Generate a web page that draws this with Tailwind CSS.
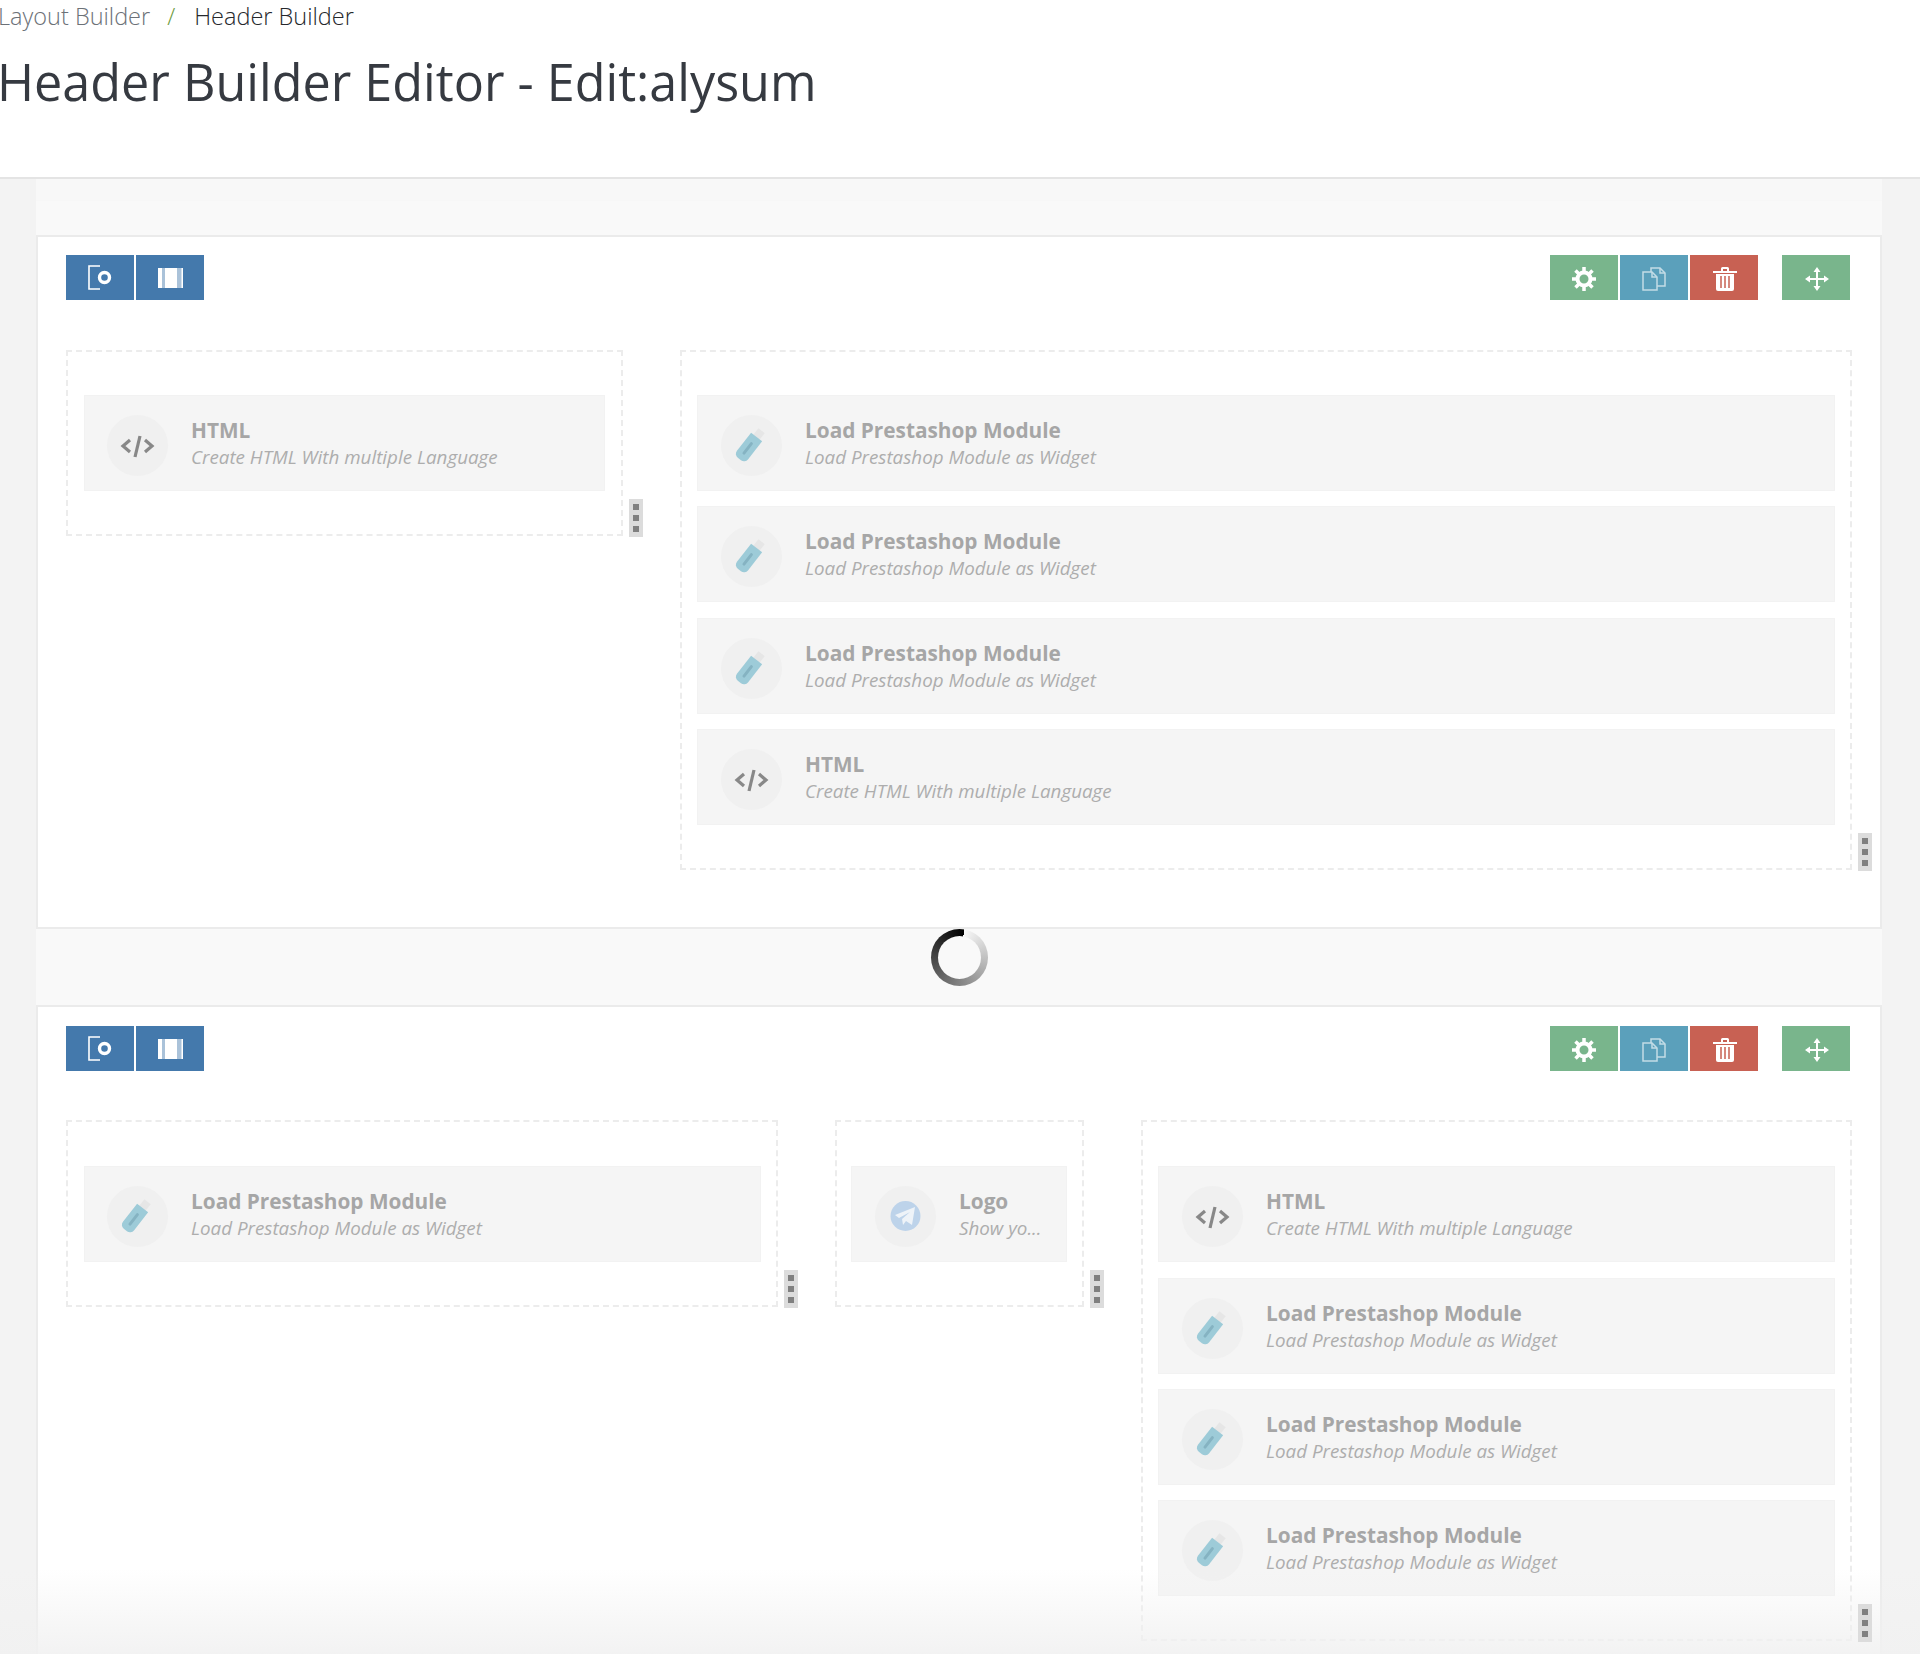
<!doctype html>
<html>
<head>
<meta charset="utf-8">
<script src="https://cdn.jsdelivr.net/npm/@tailwindcss/browser@4"></script>
</head>
<body class="font-['Open_Sans',sans-serif]">
<svg class="hidden">
<symbol id="usb" viewBox="0 0 61 61"><g transform="translate(27 33) rotate(38)"><rect x="-4" y="-22" width="8" height="9" fill="#e6e6e6"/><path d="M-7-14H7V9a5 5 0 0 1-5 5H-2a5 5 0 0 1-5-5Z" fill="#9dcbd8"/><rect x="-1.500" y="-7" width="3" height="15" rx="1.500" fill="#85b3c2"/></g></symbol>
<symbol id="code" viewBox="0 0 61 61"><g fill="none" stroke="#888" stroke-width="3.200"><path d="M23 25l-7 6 7 6M38 25l7 6-7 6"/><path d="M33 21l-5 21"/></g></symbol>
<symbol id="tg" viewBox="0 0 61 61"><circle cx="30.500" cy="30" r="15" fill="#bdd3ea"/><path d="M20 29l20-8-3 18-6-4-3 4-1-6 8-7-11 6Z" fill="#eef3f8"/></symbol>
<symbol id="add" viewBox="0 0 24 25"><g fill="none" stroke="#fff"><path stroke-width="1.600" d="M12 1H1v23h11"/><circle cx="16.500" cy="12.500" r="5" stroke-width="3.400"/></g></symbol>
<symbol id="cols" viewBox="0 0 25 20"><rect x="0" y="0" width="25" height="20" fill="#fff" opacity=".55"/><rect x="0" y="0" width="4" height="20" fill="#fff"/><rect x="7" y="0" width="12" height="20" fill="#fff"/><rect x="23.500" y="0" width="1.500" height="20" fill="#fff"/></symbol>
<symbol id="gear" viewBox="0 0 24 24"><g fill="none" stroke="#fff"><circle cx="12" cy="12" r="6.500" stroke-width="4"/><path stroke-width="3.500" d="M12 0v5M12 19v5M0 12h5M19 12h5M3.500 3.500l3.500 3.500M17 17l3.500 3.500M20.500 3.500L17 7M7 17l-3.500 3.500"/></g></symbol>
<symbol id="copy" viewBox="0 0 24 24"><g fill="#5ba0bb" stroke="#c3dce6" stroke-width="1.500"><path d="M9 1h9l5 5v13H9Z"/><path d="M1 5h9l5 5v13H1Z"/><path d="M10 5v5h5M18 1v5h5" fill="none"/></g></symbol>
<symbol id="trash" viewBox="0 0 24 25"><path d="M0 5h24v2H0Z M8 5V2.500A1.500 1.500 0 0 1 9.500 1h5A1.500 1.500 0 0 1 16 2.500V5h-2V3h-4v2Z" fill="#fff"/><path d="M3 8h18v15a2 2 0 0 1-2 2H5a2 2 0 0 1-2-2Z" fill="#fff"/><path d="M8 10v12M12 10v12M16 10v12" stroke="#c86153" stroke-width="1.500"/></symbol>
<symbol id="move" viewBox="0 0 24 24"><path d="M12 0l3.500 5H13v6h6V8.500L24 12l-5 3.500V13h-6v6h2.500L12 24l-3.500-5H11v-6H5v2.500L0 12l5-3.500V11h6V5H8.500Z" fill="#fff"/></symbol>
</svg>

<div class="relative h-[1654px] w-[1920px] overflow-hidden bg-[#f3f3f3] flex flex-col">
  <header class="h-[179px] shrink-0 bg-white border-b-2 border-[#e4e4e4] text-[#363a41]">
    <nav class="flex items-center h-[32px] text-[23.500px] leading-[32px] font-light -ml-[2px]">
      <span class="text-[#6c7177]">Layout Builder</span>
      <span class="ml-[17px] mr-[19px] text-[#6c9a3e]">/</span>
      <span class="text-[#25282c]">Header Builder</span>
    </nav>
    <h1 class="mt-[16px] -ml-[3px] text-[50.300px] leading-[68px] font-normal whitespace-nowrap">Header Builder Editor - Edit:alysum</h1>
  </header>

  <main class="ml-[36px] mr-[38px] bg-[#f9f9f9] flex-1 flex flex-col">
    <div class="h-[22px] border-b border-[#f7f7f7] bg-[#f8f8f8]"></div>
    <div class="h-[34px]"></div>

    <!-- first row -->
    <section class="bg-white border-2 border-[#ebebeb] pl-[28px] pr-[28px] pt-[18px] pb-[57px]">
      <div class="flex justify-between pr-[2px]">
        <div class="flex gap-[2px]">
          <button class="w-[68px] h-[45px] bg-[#4479ac] flex items-center justify-center"><svg class="w-[24px] h-[25px]"><use href="#add"/></svg></button>
          <button class="w-[68px] h-[45px] bg-[#4479ac] flex items-center justify-center"><svg class="w-[25px] h-[20px]"><use href="#cols"/></svg></button>
        </div>
        <div class="flex gap-[24px]">
          <div class="flex gap-[2px]">
            <button class="w-[68px] h-[45px] pt-[2px] bg-[#79b58c] flex items-center justify-center"><svg class="w-[24px] h-[24px]"><use href="#gear"/></svg></button>
            <button class="w-[68px] h-[45px] pt-[2px] bg-[#5ba0bb] flex items-center justify-center"><svg class="w-[24px] h-[24px]"><use href="#copy"/></svg></button>
            <button class="w-[68px] h-[45px] pt-[2px] pl-[2px] bg-[#c86153] flex items-center justify-center"><svg class="w-[24px] h-[25px]"><use href="#trash"/></svg></button>
          </div>
          <button class="w-[68px] h-[45px] pt-[2px] pl-[2px] bg-[#79b58c] flex items-center justify-center"><svg class="w-[24px] h-[24px]"><use href="#move"/></svg></button>
        </div>
      </div>
      <div class="flex items-start gap-[57px] mt-[50px]">
        <div class="relative w-[557px] border-2 border-dashed border-[#ececec] px-[16px] pt-[43px] pb-[43px]">
          <div class="h-[96px] bg-[#f5f5f5] border border-[#f2f2f2] flex items-start pt-[19px] pl-[22px]">
            <svg class="w-[61px] h-[61px] shrink-0 rounded-full bg-[#f0f0f0]"><use href="#code"/></svg>
            <div class="ml-[23px]"><p class="text-[20.800px] leading-[27px] font-bold text-[#a6a6a6] mt-[2px]">HTML</p><p class="text-[18.800px] leading-[27px] italic text-[#adadad] whitespace-nowrap">Create HTML With multiple Language</p></div>
          </div>
          <div class="absolute -right-[22px] -bottom-[3px] z-10 w-[14px] h-[38px] bg-[#dcdcdc] flex flex-col items-center justify-center gap-[5px]"><i class="w-[6px] h-[6px] bg-[#808080]"></i><i class="w-[6px] h-[6px] bg-[#808080]"></i><i class="w-[6px] h-[6px] bg-[#808080]"></i></div>
        </div>
        <div class="relative w-[1172px] border-2 border-dashed border-[#ececec] px-[15px] pt-[43px] pb-[43px] flex flex-col gap-[15.400px]">
          <div class="h-[96px] bg-[#f5f5f5] border border-[#f2f2f2] flex items-start pt-[19px] pl-[23px]">
            <svg class="w-[61px] h-[61px] shrink-0 rounded-full bg-[#f0f0f0]"><use href="#usb"/></svg>
            <div class="ml-[23px]"><p class="text-[20.800px] leading-[27px] font-bold text-[#a6a6a6] mt-[2px]">Load Prestashop Module</p><p class="text-[18.800px] leading-[27px] italic text-[#adadad] whitespace-nowrap">Load Prestashop Module as Widget</p></div>
          </div>
          <div class="h-[96px] bg-[#f5f5f5] border border-[#f2f2f2] flex items-start pt-[19px] pl-[23px]">
            <svg class="w-[61px] h-[61px] shrink-0 rounded-full bg-[#f0f0f0]"><use href="#usb"/></svg>
            <div class="ml-[23px]"><p class="text-[20.800px] leading-[27px] font-bold text-[#a6a6a6] mt-[2px]">Load Prestashop Module</p><p class="text-[18.800px] leading-[27px] italic text-[#adadad] whitespace-nowrap">Load Prestashop Module as Widget</p></div>
          </div>
          <div class="h-[96px] bg-[#f5f5f5] border border-[#f2f2f2] flex items-start pt-[19px] pl-[23px]">
            <svg class="w-[61px] h-[61px] shrink-0 rounded-full bg-[#f0f0f0]"><use href="#usb"/></svg>
            <div class="ml-[23px]"><p class="text-[20.800px] leading-[27px] font-bold text-[#a6a6a6] mt-[2px]">Load Prestashop Module</p><p class="text-[18.800px] leading-[27px] italic text-[#adadad] whitespace-nowrap">Load Prestashop Module as Widget</p></div>
          </div>
          <div class="h-[96px] bg-[#f5f5f5] border border-[#f2f2f2] flex items-start pt-[19px] pl-[23px]">
            <svg class="w-[61px] h-[61px] shrink-0 rounded-full bg-[#f0f0f0]"><use href="#code"/></svg>
            <div class="ml-[23px]"><p class="text-[20.800px] leading-[27px] font-bold text-[#a6a6a6] mt-[2px]">HTML</p><p class="text-[18.800px] leading-[27px] italic text-[#adadad] whitespace-nowrap">Create HTML With multiple Language</p></div>
          </div>
          <div class="absolute -right-[22px] -bottom-[3px] z-10 w-[14px] h-[38px] bg-[#dcdcdc] flex flex-col items-center justify-center gap-[5px]"><i class="w-[6px] h-[6px] bg-[#808080]"></i><i class="w-[6px] h-[6px] bg-[#808080]"></i><i class="w-[6px] h-[6px] bg-[#808080]"></i></div>
        </div>
      </div>
    </section>

    <!-- spinner strip -->
    <div class="h-[76px] shrink-0 flex justify-center">
      <div class="w-[57px] h-[57px] rounded-full bg-[conic-gradient(from_10deg,#f8f8f8,#000)] flex items-center justify-center">
        <div class="w-[43px] h-[43px] rounded-full bg-[#f9f9f9]"></div>
      </div>
    </div>

    <!-- second row -->
    <section class="bg-white border-2 border-[#ebebeb] border-b-0 flex-1 pl-[28px] pr-[28px] pt-[19px]">
      <div class="flex justify-between pr-[2px]">
        <div class="flex gap-[2px]">
          <button class="w-[68px] h-[45px] bg-[#4479ac] flex items-center justify-center"><svg class="w-[24px] h-[25px]"><use href="#add"/></svg></button>
          <button class="w-[68px] h-[45px] bg-[#4479ac] flex items-center justify-center"><svg class="w-[25px] h-[20px]"><use href="#cols"/></svg></button>
        </div>
        <div class="flex gap-[24px]">
          <div class="flex gap-[2px]">
            <button class="w-[68px] h-[45px] pt-[2px] bg-[#79b58c] flex items-center justify-center"><svg class="w-[24px] h-[24px]"><use href="#gear"/></svg></button>
            <button class="w-[68px] h-[45px] pt-[2px] bg-[#5ba0bb] flex items-center justify-center"><svg class="w-[24px] h-[24px]"><use href="#copy"/></svg></button>
            <button class="w-[68px] h-[45px] pt-[2px] pl-[2px] bg-[#c86153] flex items-center justify-center"><svg class="w-[24px] h-[25px]"><use href="#trash"/></svg></button>
          </div>
          <button class="w-[68px] h-[45px] pt-[2px] pl-[2px] bg-[#79b58c] flex items-center justify-center"><svg class="w-[24px] h-[24px]"><use href="#move"/></svg></button>
        </div>
      </div>
      <div class="flex items-start gap-[57px] mt-[49px]">
        <div class="relative w-[712px] border-2 border-dashed border-[#ececec] pl-[16px] pr-[15px] pt-[44px] pb-[43px]">
          <div class="h-[96px] bg-[#f5f5f5] border border-[#f2f2f2] flex items-start pt-[19px] pl-[22px]">
            <svg class="w-[61px] h-[61px] shrink-0 rounded-full bg-[#f0f0f0]"><use href="#usb"/></svg>
            <div class="ml-[23px]"><p class="text-[20.800px] leading-[27px] font-bold text-[#a6a6a6] mt-[2px]">Load Prestashop Module</p><p class="text-[18.800px] leading-[27px] italic text-[#adadad] whitespace-nowrap">Load Prestashop Module as Widget</p></div>
          </div>
          <div class="absolute -right-[22px] -bottom-[3px] z-10 w-[14px] h-[38px] bg-[#dcdcdc] flex flex-col items-center justify-center gap-[5px]"><i class="w-[6px] h-[6px] bg-[#808080]"></i><i class="w-[6px] h-[6px] bg-[#808080]"></i><i class="w-[6px] h-[6px] bg-[#808080]"></i></div>
        </div>
        <div class="relative w-[249px] border-2 border-dashed border-[#ececec] pl-[14px] pr-[15px] pt-[44px] pb-[43px]">
          <div class="h-[96px] bg-[#f5f5f5] border border-[#f2f2f2] flex items-start pt-[19px] pl-[23px]">
            <svg class="w-[61px] h-[61px] shrink-0 rounded-full bg-[#f0f0f0]"><use href="#tg"/></svg>
            <div class="ml-[23px]"><p class="text-[20.800px] leading-[27px] font-bold text-[#a6a6a6] mt-[2px]">Logo</p><p class="text-[18.800px] leading-[27px] italic text-[#adadad] whitespace-nowrap">Show yo...</p></div>
          </div>
          <div class="absolute -right-[22px] -bottom-[3px] z-10 w-[14px] h-[38px] bg-[#dcdcdc] flex flex-col items-center justify-center gap-[5px]"><i class="w-[6px] h-[6px] bg-[#808080]"></i><i class="w-[6px] h-[6px] bg-[#808080]"></i><i class="w-[6px] h-[6px] bg-[#808080]"></i></div>
        </div>
        <div class="relative w-[711px] border-2 border-dashed border-[#ececec] px-[15px] pt-[44px] pb-[43px] flex flex-col gap-[15.400px]">
          <div class="h-[96px] bg-[#f5f5f5] border border-[#f2f2f2] flex items-start pt-[19px] pl-[23px]">
            <svg class="w-[61px] h-[61px] shrink-0 rounded-full bg-[#f0f0f0]"><use href="#code"/></svg>
            <div class="ml-[23px]"><p class="text-[20.800px] leading-[27px] font-bold text-[#a6a6a6] mt-[2px]">HTML</p><p class="text-[18.800px] leading-[27px] italic text-[#adadad] whitespace-nowrap">Create HTML With multiple Language</p></div>
          </div>
          <div class="h-[96px] bg-[#f5f5f5] border border-[#f2f2f2] flex items-start pt-[19px] pl-[23px]">
            <svg class="w-[61px] h-[61px] shrink-0 rounded-full bg-[#f0f0f0]"><use href="#usb"/></svg>
            <div class="ml-[23px]"><p class="text-[20.800px] leading-[27px] font-bold text-[#a6a6a6] mt-[2px]">Load Prestashop Module</p><p class="text-[18.800px] leading-[27px] italic text-[#adadad] whitespace-nowrap">Load Prestashop Module as Widget</p></div>
          </div>
          <div class="h-[96px] bg-[#f5f5f5] border border-[#f2f2f2] flex items-start pt-[19px] pl-[23px]">
            <svg class="w-[61px] h-[61px] shrink-0 rounded-full bg-[#f0f0f0]"><use href="#usb"/></svg>
            <div class="ml-[23px]"><p class="text-[20.800px] leading-[27px] font-bold text-[#a6a6a6] mt-[2px]">Load Prestashop Module</p><p class="text-[18.800px] leading-[27px] italic text-[#adadad] whitespace-nowrap">Load Prestashop Module as Widget</p></div>
          </div>
          <div class="h-[96px] bg-[#f5f5f5] border border-[#f2f2f2] flex items-start pt-[19px] pl-[23px]">
            <svg class="w-[61px] h-[61px] shrink-0 rounded-full bg-[#f0f0f0]"><use href="#usb"/></svg>
            <div class="ml-[23px]"><p class="text-[20.800px] leading-[27px] font-bold text-[#a6a6a6] mt-[2px]">Load Prestashop Module</p><p class="text-[18.800px] leading-[27px] italic text-[#adadad] whitespace-nowrap">Load Prestashop Module as Widget</p></div>
          </div>
          <div class="absolute -right-[22px] -bottom-[3px] z-10 w-[14px] h-[38px] bg-[#dcdcdc] flex flex-col items-center justify-center gap-[5px]"><i class="w-[6px] h-[6px] bg-[#808080]"></i><i class="w-[6px] h-[6px] bg-[#808080]"></i><i class="w-[6px] h-[6px] bg-[#808080]"></i></div>
        </div>
      </div>
    </section>
  </main>

  <div class="absolute inset-x-0 bottom-0 h-[85px] bg-linear-to-b from-transparent to-[#f1f1f1]/90"></div>
</div>
</body>
</html>
